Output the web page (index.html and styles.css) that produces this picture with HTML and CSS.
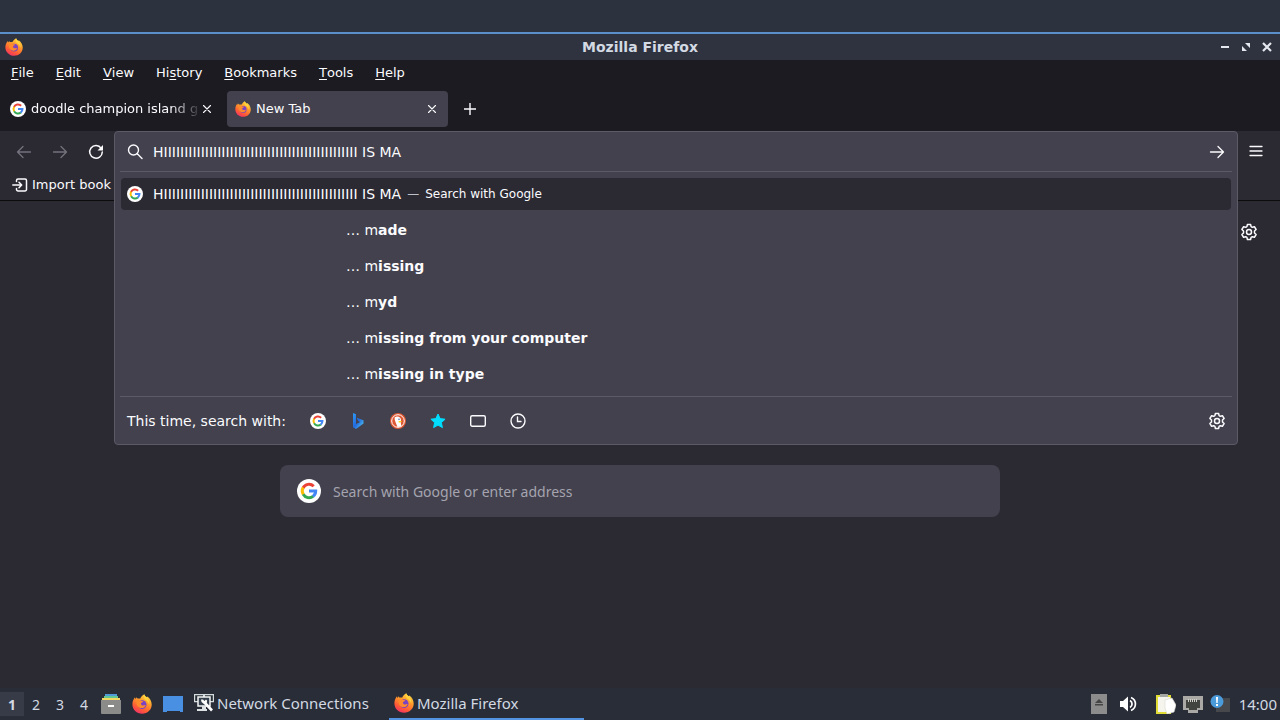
FILE: index.html
```html
<!DOCTYPE html>
<html lang="en">
<head>
<meta charset="utf-8">
<title>Mozilla Firefox</title>
<link rel="stylesheet" href="styles.css">
</head>
<body>
<svg class="defs" aria-hidden="true">
  <defs>
    <linearGradient id="flame" x1="0.8" y1="0" x2="0.3" y2="1"><stop offset="0" stop-color="#ffe14a"/><stop offset=".4" stop-color="#ff9a2a"/><stop offset=".75" stop-color="#ff5a36"/><stop offset="1" stop-color="#f0306a"/></linearGradient>
    <linearGradient id="bingfill" x1="0" y1="0" x2="1" y2="1"><stop offset="0" stop-color="#2e9df5"/><stop offset=".5" stop-color="#2469dc"/><stop offset="1" stop-color="#55d6f4"/></linearGradient>
    <symbol id="fox" viewBox="0 0 20 20">
      <path fill="url(#flame)" d="M12.4.2c.2 1.3 1 2 2.200 3.100l.7-.9c2.700 1.900 4.400 4.900 4.400 8.200 0 5.300-4.200 9.200-9.600 9.200S.4 15.700.4 10.300c0-2.700 1-5.200 2.600-7.100l.4 1.700 1.400-1.700.5 1.400c1-.3 2-.2 2.800.100C9.100 2.800 10.600 1 12.400.2Z"/>
      <circle cx="10.200" cy="10.600" r="4.300" fill="#7a43c4"/>
      <path fill="#ff8a2b" d="M4.500 6.200c1.600-.9 3.500-.5 4.600.7l2.200.3c-.3 1-1.700 1.400-2.200 1.700-.5 1.200.2 2.200 1.600 2.500 1.200.2 1.900-.6 2.900-.2-.7 2-2.400 3.100-4.400 2.900-3-.2-5.500-3-4.700-7.900Z"/>
      <path fill="#ffd53e" d="M12.400.2c.2 1.300 1 2 2.200 3.100 2.200 2.200 3 4.500 2.500 7.400-.6-2.600-2-4.300-4-5.100-1.100-1.500-1.400-3.300-.7-5.400Z"/>
    </symbol>
    <symbol id="google" viewBox="0 0 24 24">
      <circle cx="12" cy="12" r="12" fill="#fff"/>
      <g fill="none" stroke-width="3">
        <path stroke="#ea4335" d="M6 9A6.700 6.700 0 0 1 16.700 7.200"/>
        <path stroke="#fbbc05" d="M6.300 15.500A6.700 6.700 0 0 1 6.200 8.600"/>
        <path stroke="#34a853" d="M6.200 15.300A6.700 6.700 0 0 0 16.300 17.200"/>
        <path stroke="#4285f4" d="M12 12h6.700a6.700 6.700 0 0 1-2.700 5.400"/>
      </g>
    </symbol>
    <symbol id="gear" viewBox="0 0 18 18">
      <path fill="none" stroke="currentColor" stroke-width="1.500" stroke-linejoin="round" d="M7.400 1.500h3.200l.5 2.100 1.200.7 2.100-.6 1.700 2.800-1.600 1.500v2l1.600 1.500-1.700 2.800-2.100-.6-1.200.7-.5 2.100H7.400l-.5-2.100-1.200-.7-2.100.6-1.700-2.800L3.500 10V8L1.900 6.500l1.700-2.800 2.100.6 1.200-.7Z"/>
      <circle cx="9" cy="9" r="2.500" fill="none" stroke="currentColor" stroke-width="1.500"/>
    </symbol>
    <symbol id="arrow" viewBox="0 0 16 16"><path fill="none" stroke="currentColor" stroke-width="1.300" stroke-linecap="round" stroke-linejoin="round" d="M1.500 8h13M9 2.500 14.500 8 9 13.500"/></symbol>
    <symbol id="cross" viewBox="0 0 10 10"><path fill="none" stroke="currentColor" stroke-width="1.100" stroke-linecap="round" d="m1.500 1.500 7 7M8.500 1.500l-7 7"/></symbol>
  </defs>
</svg>

<header class="titlebar">
  <svg class="i18"><use href="#fox"/></svg>
  <h1>Mozilla Firefox</h1>
  <div class="winbtns">
    <button aria-label="Minimize"><svg viewBox="0 0 10 10"><path fill="currentColor" d="M1 4h8v2H1z"/></svg></button>
    <button aria-label="Maximize"><svg viewBox="0 0 10 10"><path fill="currentColor" d="M4 1h5v5zM1 4l5 5H1z"/></svg></button>
    <button aria-label="Close"><svg viewBox="0 0 10 10"><path stroke="currentColor" stroke-width="2.200" d="m1 1 8 8M9 1 1 9"/></svg></button>
  </div>
</header>

<nav class="menubar">
  <button><u>F</u>ile</button><button><u>E</u>dit</button><button><u>V</u>iew</button><button>Hi<u>s</u>tory</button><button><u>B</u>ookmarks</button><button><u>T</u>ools</button><button><u>H</u>elp</button>
</nav>

<div class="tabs">
  <div class="tab"><svg class="i16"><use href="#google"/></svg><span class="label faded">doodle champion island g</span><button aria-label="Close tab"><svg class="i10"><use href="#cross"/></svg></button></div>
  <div class="tab active"><svg class="i16"><use href="#fox"/></svg><span class="label">New Tab</span><button aria-label="Close tab"><svg class="i10"><use href="#cross"/></svg></button></div>
  <button class="newtab" aria-label="New tab"><svg class="i12" viewBox="0 0 12 12"><path stroke="currentColor" stroke-width="1.400" d="M6 0v12M0 6h12"/></svg></button>
</div>

<div class="toolbar">
  <div class="navrow">
    <button class="dim" aria-label="Back"><svg class="i16 flip"><use href="#arrow"/></svg></button>
    <button class="dim" aria-label="Forward"><svg class="i16"><use href="#arrow"/></svg></button>
    <button aria-label="Reload"><svg class="i16" viewBox="0 0 16 16"><path fill="none" stroke="currentColor" stroke-width="1.500" stroke-linecap="round" d="M13.200 4.300A6.300 6.300 0 1 0 14.300 8"/><path fill="currentColor" d="M15 1v5.500H9.500z"/></svg></button>
    <button class="menu" aria-label="Open menu"><svg class="i14" viewBox="0 0 14 14"><path stroke="currentColor" stroke-width="1.300" stroke-linecap="round" d="M1 1.500h12M1 6h12M1 10.500h12"/></svg></button>
  </div>
  <div class="bookmarks">
    <button><svg class="i16" viewBox="0 0 16 16"><path fill="none" stroke="currentColor" stroke-width="1.500" stroke-linecap="round" stroke-linejoin="round" d="M4.500 4.500V3.500a1.500 1.500 0 0 1 1.500-1.500h7a1.500 1.500 0 0 1 1.500 1.500v9a1.500 1.500 0 0 1-1.500 1.500H6a1.500 1.500 0 0 1-1.500-1.500v-1M.8 8h8.700M7 5.300 9.700 8 7 10.700"/></svg>Import book</button>
  </div>

  <section class="urlbar">
    <div class="entry">
      <svg class="i16" viewBox="0 0 16 16"><g fill="none" stroke="currentColor" stroke-width="1.400" stroke-linecap="round"><circle cx="6.500" cy="6" r="5"/><path d="m10.300 9.800 4.700 4.700"/></g></svg>
      <input aria-label="Search or enter address" value="HIIIIIIIIIIIIIIIIIIIIIIIIIIIIIIIIIIIIIIIIIIIIIII IS MA">
      <button aria-label="Go"><svg class="i16"><use href="#arrow"/></svg></button>
    </div>
    <div class="results">
      <div class="row selected"><svg class="i16"><use href="#google"/></svg><span>HIIIIIIIIIIIIIIIIIIIIIIIIIIIIIIIIIIIIIIIIIIIIIII IS MA</span><span class="dash">—</span><small>Search with Google</small></div>
      <div class="row hint"><span>… m<b>ade</b></span></div>
      <div class="row hint"><span>… m<b>issing</b></span></div>
      <div class="row hint"><span>… m<b>yd</b></span></div>
      <div class="row hint"><span>… m<b>issing from your computer</b></span></div>
      <div class="row hint"><span>… m<b>issing in type</b></span></div>
    </div>
    <div class="engines">
      <span>This time, search with:</span>
      <div class="list">
        <button aria-label="Google"><svg class="i16"><use href="#google"/></svg></button>
        <button aria-label="Bing"><svg class="i16" viewBox="0 0 16 16"><path fill="url(#bingfill)" d="m3 0 3 1.200v9.900L10.200 9 8.100 8 6.800 4.800l6.700 2.400v3.300L6 16l-3-1.800z"/></svg></button>
        <button aria-label="DuckDuckGo"><svg class="i16" viewBox="0 0 16 16"><circle cx="8" cy="8" r="8" fill="#de5833"/><circle cx="8" cy="8" r="6.300" fill="#de5833" stroke="#fff"/><path fill="#fff" d="M4.600 4.400C7 2.300 11 3.800 11 7l-.3 2 .6 4.500-3.800.6C6.300 10.500 4.300 7.300 4.600 4.400Z"/><path fill="#fdd20a" d="M8.500 8.300c1.200-.6 3-.5 3.400.1-.5.700-2 .5-2.200 1.200l-1-.2z"/><circle cx="9" cy="6.200" r=".7" fill="#2d4f8e"/></svg></button>
        <button aria-label="Bookmarks"><svg class="i16" viewBox="0 0 16 16"><path fill="#00ddff" stroke="#00ddff" stroke-linejoin="round" d="m8 1 2.100 4.600 5 .6-3.700 3.400 1 5L8 12.100l-4.400 2.500 1-5L.9 6.200l5-.6z"/></svg></button>
        <button aria-label="Tabs"><svg class="i16" viewBox="0 0 16 16"><rect x=".7" y="2.700" width="14.600" height="10.600" rx="1.500" fill="none" stroke="currentColor" stroke-width="1.400"/></svg></button>
        <button aria-label="History"><svg class="i16" viewBox="0 0 16 16"><g fill="none" stroke="currentColor" stroke-width="1.400" stroke-linecap="round"><circle cx="8" cy="8" r="7"/><path d="M7.500 4v4.500H11"/></g></svg></button>
      </div>
      <button aria-label="Search settings"><svg class="i18"><use href="#gear"/></svg></button>
    </div>
  </section>
</div>

<main>
  <button class="customize" aria-label="Personalize new tab"><svg class="i18"><use href="#gear"/></svg></button>
  <label class="search"><svg class="i24"><use href="#google"/></svg><input aria-label="Search" placeholder="Search with Google or enter address"></label>
</main>

<footer class="taskbar">
  <div class="desks"><button class="current">1</button><button>2</button><button>3</button><button>4</button></div>
  <div class="launch">
    <button aria-label="Files"><svg class="i20" viewBox="0 0 20 20"><path fill="#4f9bd8" d="M4 0h12v3H4z"/><path fill="#62c793" d="M3 2h14v3H3z"/><path fill="#f3d763" d="M1 4h18v3H1z"/><path fill="#8b8b89" d="M0 6h20v13a1 1 0 0 1-1 1H1a1 1 0 0 1-1-1z"/><path fill="#fff" d="M7 11h6v2H7z"/></svg></button>
    <button aria-label="Firefox"><svg class="i20"><use href="#fox"/></svg></button>
    <button aria-label="Show desktop"><svg class="i20" viewBox="0 0 20 20"><path fill="#4a90e2" d="M0 2h20v16h-3v-1H4v1H0z"/></svg></button>
  </div>
  <button class="task"><svg class="i20" viewBox="0 0 20 20"><path fill="#273038" stroke="#d5dadd" stroke-width="1.200" d="M.6 1.600h9v7h-9zM10.400 1.600h9v7h-9z"/><path fill="#34404b" stroke="#f2f4f4" stroke-width="1.500" d="M4 4h12v9H4z"/><path fill="#dce1e3" d="M8 13h4v3H8zM3 16h10v2H3z"/><path stroke="#fff" stroke-width="2.600" d="m10.500 9.500 7.500 8"/><path fill="#fff" d="M7 6.500h2L10.500 8 12 6.500l1.200 1.200-.7 2.800-2.500.6L7.500 9z"/></svg>Network Connections</button>
  <button class="task on"><svg class="i20"><use href="#fox"/></svg>Mozilla Firefox</button>
  <div class="tray">
    <svg class="eject" viewBox="0 0 16 20"><path fill="#8c8c8c" d="M0 0h16v20H0z"/><path fill="#454545" d="m8 5 4 4H4zM4 10h8v1.500H4z"/></svg>
    <svg class="vol" viewBox="0 0 18 16"><path fill="#fff" d="M1 5h3l5-4.500v15L4 11H1z"/><path fill="none" stroke="#fff" stroke-width="1.700" d="M11 4.500a4 4 0 0 1 0 7M12 1.500a7 7 0 0 1 0 13"/></svg>
    <svg class="i20" viewBox="0 0 20 20"><path fill="#e2dc37" d="M0 1h15v19H0z"/><path fill="#f5f5ee" d="M2 3h12v15H2z"/><path fill="#a5a7a3" d="M4 0h8v3H4z"/><path fill="#fff" stroke="#d8d8d0" stroke-width=".6" d="m9 6 7-2 4 7-2 7-7 2-2-6z"/></svg>
    <svg class="i20" viewBox="0 0 20 20"><path fill="#aaa9a5" d="M0 2h20v14h-5v3H5v-3H0z"/><path fill="#42443f" d="M3 6h14v8h-3v2H6v-2H3z"/><path stroke="#d0d0c8" d="M5.500 5v3M7.500 5v3M9.500 5v3M11.500 5v3M13.500 5v3"/></svg>
    <svg class="i20" viewBox="0 0 20 20"><path fill="#46484b" d="M6 4h14v14H6z"/><circle cx="7" cy="7.500" r="6.500" fill="#4b9ada"/><path fill="#fff" d="M6 3h2l-.3 6H6.300zM6 10h2v2H6z"/></svg>
    <time>14:00</time>
  </div>
</footer>
</body>
</html>
```
FILE: styles.css
```css
* { box-sizing: border-box; }
body {
  margin: 0;
  min-height: 100vh;
  display: flex;
  flex-direction: column;
  padding-top: 32px;
  background: #2d323f;
  color: #fbfbfe;
  font: 13px/20px "DejaVu Sans", sans-serif;
}
button {
  display: flex;
  align-items: center;
  justify-content: center;
  padding: 0;
  border: 0;
  background: none;
  color: inherit;
  font: inherit;
  white-space: nowrap;
}
input {
  flex: 1;
  min-width: 0;
  padding: 0;
  border: 0;
  outline: 0;
  background: none;
  color: inherit;
  font: inherit;
}
svg { display: block; flex: none; }
.defs { position: absolute; width: 0; height: 0; }
.i10 { width: 10px; height: 10px; }
.i12 { width: 12px; height: 12px; }
.i14 { width: 14px; height: 14px; }
.i16 { width: 16px; height: 16px; }
.i18 { width: 18px; height: 18px; }
.i20 { width: 20px; height: 20px; }
.i24 { width: 24px; height: 24px; }
.flip { transform: scaleX(-1); }

.titlebar {
  display: grid;
  grid-template-columns: 1fr auto 1fr;
  align-items: center;
  height: 28px;
  padding: 0 5px;
  border-top: 2px solid #5b8fca;
  background: #2e333f;
}
.titlebar h1 { margin: 0; font-size: 14px; color: #d3dae3; }
.winbtns { display: flex; justify-content: end; gap: 11px; padding-right: 3px; color: #e4e8ee; }
.winbtns svg { width: 10px; height: 10px; }

.menubar { display: flex; gap: 22px; height: 26px; padding: 0 11px; background: #1c1b22; }
.menubar u { text-underline-offset: 2px; }

.tabs { display: flex; gap: 10px; height: 45px; padding: 5px 0 4px; background: #1c1b22; }
.tab { display: flex; align-items: center; width: 217px; padding: 0 5px 0 10px; border-radius: 4px; }
.tab.active { width: 221px; padding: 0 11px 0 8px; background: #42414d; }
.label { flex: 1; margin-left: 5px; white-space: nowrap; }
.faded { mask-image: linear-gradient(to left, transparent, #000 32px); }
.newtab { width: 24px; }

.toolbar {
  position: relative;
  height: 70px;
  background: #2b2a33;
  border-bottom: 1px solid #0c0c0d;
}
.navrow { display: flex; align-items: center; gap: 20px; height: 42px; padding: 0 17px 0 16px; }
.dim { color: #74737d; }
.menu { margin-left: auto; }
.bookmarks { display: flex; height: 24px; padding-left: 12px; }
.bookmarks button { gap: 4px; }

.urlbar {
  position: absolute;
  z-index: 1;
  top: 0;
  left: 114px;
  right: 42px;
  padding: 0 5px;
  border: 1px solid #5b5a66;
  border-radius: 4px;
  background: #42414d;
  font-size: 14px;
}
.entry, .row, .engines { display: flex; align-items: center; }
.entry { height: 40px; padding: 0 7px; gap: 10px; border-bottom: 1px solid #5b5a66; }
.results { display: grid; gap: 4px; padding: 6px 1px; }
.row { height: 32px; padding: 0 6px; border-radius: 4px; gap: 10px; white-space: nowrap; }
.selected { background: #2b2a33; }
.dash { margin: 0 -4px; font-size: 12px; color: #bfbfc9; }
.row small { font-size: 12px; }
.hint { padding-left: 225px; }
.engines { height: 48px; padding: 0 6px 0 7px; border-top: 1px solid #5b5a66; }
.list { display: flex; gap: 24px; margin: 0 auto 0 24px; }

main { position: relative; flex: 1; display: flex; justify-content: center; align-items: start; padding: 264px 280px 0; background: #2b2a33; }
.customize { position: absolute; top: 22px; right: 22px; }
.search {
  flex: 1;
  max-width: 720px;
  display: flex;
  align-items: center;
  gap: 12px;
  height: 52px;
  padding: 0 17px;
  border-radius: 8px;
  background: #42414d;
  font: 14px "Noto Sans", sans-serif;
}
.search input::placeholder { color: #a5a4af; opacity: 1; }

.taskbar {
  display: flex;
  align-items: stretch;
  height: 32px;
  background: #292d38;
  color: #d3dae3;
  font: 15px "Noto Sans", sans-serif;
}
.desks, .launch, .tray { display: flex; align-items: center; }
.desks button { width: 24px; height: 24px; font-size: 14px; }
.desks .current { background: #363b47; font-weight: bold; }
.launch { gap: 11px; margin: 0 11px 0 5px; }
.task { justify-content: start; width: 195px; gap: 3px; border-bottom: 2px solid transparent; }
.task.on { border-color: #5294e2; padding-left: 5px; }
.tray { margin-left: auto; gap: 7px; padding-right: 3px; }
.eject { width: 16px; height: 20px; }
.vol { width: 18px; height: 16px; margin: 0 12px 0 5px; }
.tray time { margin-left: 2px; }
```
